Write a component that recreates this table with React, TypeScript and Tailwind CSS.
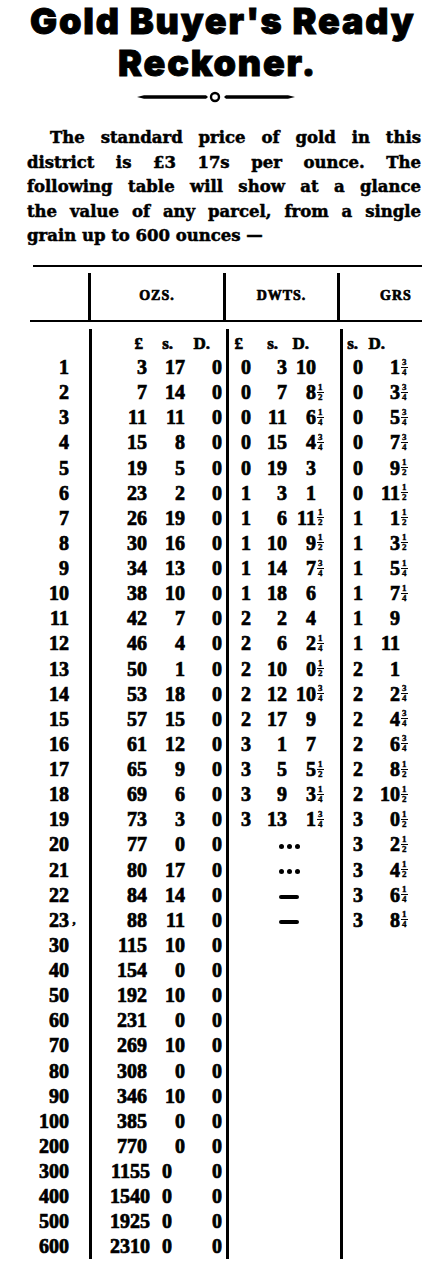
import React from "react"

type Fr = "" | "1/4" | "1/2" | "3/4"
type Dw = [string, string, string, Fr] | "dots" | "dash" | null
type Gr = [string, string, Fr] | null
type Row = { oz: string; l: string; s: string; d: string; dw: Dw; gr: Gr }

const serif = "font-['Liberation_Serif','Times_New_Roman',serif] font-bold [-webkit-text-stroke:0.7px_black]"

const rows: Row[] = [
    { oz: "1", l: "3", s: "17", d: "0", dw: ["0", "3", "10", ""], gr: ["0", "1", "3/4"] },
    { oz: "2", l: "7", s: "14", d: "0", dw: ["0", "7", "8", "1/2"], gr: ["0", "3", "3/4"] },
    { oz: "3", l: "11", s: "11", d: "0", dw: ["0", "11", "6", "1/4"], gr: ["0", "5", "3/4"] },
    { oz: "4", l: "15", s: "8", d: "0", dw: ["0", "15", "4", "3/4"], gr: ["0", "7", "3/4"] },
    { oz: "5", l: "19", s: "5", d: "0", dw: ["0", "19", "3", ""], gr: ["0", "9", "1/2"] },
    { oz: "6", l: "23", s: "2", d: "0", dw: ["1", "3", "1", ""], gr: ["0", "11", "1/2"] },
    { oz: "7", l: "26", s: "19", d: "0", dw: ["1", "6", "11", "1/2"], gr: ["1", "1", "1/2"] },
    { oz: "8", l: "30", s: "16", d: "0", dw: ["1", "10", "9", "1/2"], gr: ["1", "3", "1/2"] },
    { oz: "9", l: "34", s: "13", d: "0", dw: ["1", "14", "7", "3/4"], gr: ["1", "5", "1/4"] },
    { oz: "10", l: "38", s: "10", d: "0", dw: ["1", "18", "6", ""], gr: ["1", "7", "1/4"] },
    { oz: "11", l: "42", s: "7", d: "0", dw: ["2", "2", "4", ""], gr: ["1", "9", ""] },
    { oz: "12", l: "46", s: "4", d: "0", dw: ["2", "6", "2", "1/4"], gr: ["1", "11", ""] },
    { oz: "13", l: "50", s: "1", d: "0", dw: ["2", "10", "0", "1/2"], gr: ["2", "1", ""] },
    { oz: "14", l: "53", s: "18", d: "0", dw: ["2", "12", "10", "3/4"], gr: ["2", "2", "3/4"] },
    { oz: "15", l: "57", s: "15", d: "0", dw: ["2", "17", "9", ""], gr: ["2", "4", "3/4"] },
    { oz: "16", l: "61", s: "12", d: "0", dw: ["3", "1", "7", ""], gr: ["2", "6", "3/4"] },
    { oz: "17", l: "65", s: "9", d: "0", dw: ["3", "5", "5", "1/2"], gr: ["2", "8", "1/2"] },
    { oz: "18", l: "69", s: "6", d: "0", dw: ["3", "9", "3", "1/4"], gr: ["2", "10", "1/2"] },
    { oz: "19", l: "73", s: "3", d: "0", dw: ["3", "13", "1", "3/4"], gr: ["3", "0", "1/2"] },
    { oz: "20", l: "77", s: "0", d: "0", dw: "dots", gr: ["3", "2", "1/2"] },
    { oz: "21", l: "80", s: "17", d: "0", dw: "dots", gr: ["3", "4", "1/2"] },
    { oz: "22", l: "84", s: "14", d: "0", dw: "dash", gr: ["3", "6", "1/4"] },
    { oz: "23", l: "88", s: "11", d: "0", dw: "dash", gr: ["3", "8", "1/4"] },
    { oz: "30", l: "115", s: "10", d: "0", dw: null, gr: null },
    { oz: "40", l: "154", s: "0", d: "0", dw: null, gr: null },
    { oz: "50", l: "192", s: "10", d: "0", dw: null, gr: null },
    { oz: "60", l: "231", s: "0", d: "0", dw: null, gr: null },
    { oz: "70", l: "269", s: "10", d: "0", dw: null, gr: null },
    { oz: "80", l: "308", s: "0", d: "0", dw: null, gr: null },
    { oz: "90", l: "346", s: "10", d: "0", dw: null, gr: null },
    { oz: "100", l: "385", s: "0", d: "0", dw: null, gr: null },
    { oz: "200", l: "770", s: "0", d: "0", dw: null, gr: null },
    { oz: "300", l: "1155", s: "0", d: "0", dw: null, gr: null },
    { oz: "400", l: "1540", s: "0", d: "0", dw: null, gr: null },
    { oz: "500", l: "1925", s: "0", d: "0", dw: null, gr: null },
    { oz: "600", l: "2310", s: "0", d: "0", dw: null, gr: null },
]

function Frac({ f }: { f: Fr }) {
    if (!f) return null
    const [n, d] = f.split("/")
    return (
        <span className="ml-[1px] inline-flex flex-col items-center text-[9px] leading-[9px] [-webkit-text-stroke:0.4px_black]">
            <span>{n}</span>
            <span className="border-t-[1.5px] border-black px-[1px]">{d}</span>
        </span>
    )
}

function Ornament() {
    return (
        <svg width="160" height="12" viewBox="0 0 160 12" className="mx-auto block translate-x-[5px]">
            <path d="M1 6 L8 4.3 L70 4.3 L72 6 L70 7.7 L8 7.7 Z" fill="black" />
            <path d="M88 6 L90 4.3 L152 4.3 L159 6 L152 7.7 L90 7.7 Z" fill="black" />
            <circle cx="79" cy="6" r="4" fill="white" stroke="black" strokeWidth="2.4" />
        </svg>
    )
}

function Dots() {
    return (
        <span className="ml-[50px] mt-[4px] flex gap-[3px]">
            <span className="h-[5px] w-[5px] rounded-full bg-black" />
            <span className="h-[5px] w-[5px] rounded-full bg-black" />
            <span className="h-[5px] w-[5px] rounded-full bg-black" />
        </span>
    )
}

const Reckoner = () => {
    const line = "text-justify [text-align-last:justify]"
    return (
        <div className="w-[422px] h-[1263px] overflow-hidden bg-white text-black">
            <div className="font-['Inter',sans-serif] font-black text-[36px] leading-[42px] tracking-[1.8px] [-webkit-text-stroke:0.9px_black]">
                <div className="pl-[30px] whitespace-nowrap">Gold Buyer's Ready</div>
                <div className="pl-[118px] whitespace-nowrap">Reckoner.</div>
            </div>
            <div className="mt-[7px]">
                <Ornament />
            </div>

            <div className="mt-[23px] pl-[27px] pr-[1px] font-['DejaVu_Serif',serif] font-bold text-[16.5px] leading-[24.5px] [-webkit-text-stroke:0.5px_black]">
                <div className={line + " pl-[23px]"}>The standard price of gold in this</div>
                <div className={line}>district is £3 17s per ounce. The</div>
                <div className={line}>following table will show at a glance</div>
                <div className={line}>the value of any parcel, from a single</div>
                <div>grain up to 600 ounces —</div>
            </div>

            {/* table head */}
            <div className="mt-[16px] ml-[33px] h-[2px] bg-black" />
            <div className={"flex h-[53px] text-[14px] tracking-[1px] " + serif}>
                <div className="w-[88px]" />
                <div className="mt-[6px] w-[3px] bg-black" />
                <div className="w-[132px] flex items-center justify-center pt-[4px]">OZS.</div>
                <div className="mt-[6px] w-[3px] bg-black" />
                <div className="w-[111px] flex items-center justify-center pt-[4px]">DWTS.</div>
                <div className="mt-[6px] w-[3px] bg-black" />
                <div className="flex-1 flex items-center pl-[40px] pt-[4px]">GRS</div>
            </div>
            <div className="ml-[30px] h-[2px] bg-black" />

            {/* table body */}
            <div className={"text-[20px] " + serif}>
                <div className="h-[7px]" />
                <div className="flex h-[26px] text-[17px] leading-[22px]">
                    <div className="w-[89px]" />
                    <div className="w-[137px] border-l-[3px] border-black flex pt-[4px]">
                        <span className="w-[51px] text-right">£</span>
                        <span className="w-[30px] text-right">s.</span>
                        <span className="w-[37px] text-right">D.</span>
                    </div>
                    <div className="w-[114px] border-l-[3px] border-black flex pt-[4px]">
                        <span className="w-[14px] text-right">£</span>
                        <span className="w-[35px] text-right">s.</span>
                        <span className="w-[31px] text-right">D.</span>
                    </div>
                    <div className="flex-1 border-l-[3px] border-black flex pt-[4px]">
                        <span className="w-[15px] text-right">s.</span>
                        <span className="w-[27px] text-right">D.</span>
                    </div>
                </div>
                {rows.map((r) => {
                    const big = r.l.length === 4
                    return (
                        <div key={r.oz} className="flex h-[25.14px] leading-[22px]">
                            <div className="w-[89px] pr-[20px] flex items-center justify-end">
                                <span>{r.oz}</span>
                                {r.oz === "23" && <span className="w-[10px] -mr-[10px] text-[12px] text-center">,</span>}
                            </div>
                            <div className="w-[137px] border-l-[3px] border-black flex items-center">
                                <span className={(big ? "w-[58px]" : "w-[55px]") + " text-right"}>{r.l}</span>
                                <span className={(big ? "w-[22px]" : "w-[38px]") + " text-right"}>{r.s}</span>
                                <span className={(big ? "w-[50px]" : "w-[37px]") + " text-right"}>{r.d}</span>
                            </div>
                            <div className="w-[114px] border-l-[3px] border-black flex items-center">
                                {Array.isArray(r.dw) ? (
                                    <>
                                        <span className="w-[22px] text-right">{r.dw[0]}</span>
                                        <span className="w-[36px] text-right">{r.dw[1]}</span>
                                        <span className="w-[29px] text-right">{r.dw[2]}</span>
                                        <Frac f={r.dw[3]} />
                                    </>
                                ) : r.dw === "dots" ? (
                                    <Dots />
                                ) : r.dw === "dash" ? (
                                    <span className="ml-[50px] mt-[4px] h-[4px] w-[20px] rounded-full bg-black" />
                                ) : null}
                            </div>
                            <div className="flex-1 border-l-[3px] border-black flex items-center">
                                {r.gr && (
                                    <>
                                        <span className="w-[20px] text-right">{r.gr[0]}</span>
                                        <span className="w-[37px] text-right">{r.gr[1]}</span>
                                        <Frac f={r.gr[2]} />
                                    </>
                                )}
                            </div>
                        </div>
                    )
                })}
            </div>
        </div>
    )
}

export default function App() {
    return <Reckoner />
}
